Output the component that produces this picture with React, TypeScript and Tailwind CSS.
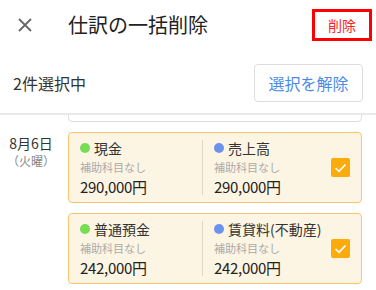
const font = "font-['Noto_Sans_CJK_JP','Noto_Sans',sans-serif]"

type Side = { name: string; dot: string; amount: string }

function CardSide({ side }: { side: Side }) {
  return (
    <div className="flex flex-col">
      <div className="flex items-center h-5 text-[14px] text-[#333]">
        <span className="w-[10px] h-[10px] rounded-full mr-[4px]" style={{ backgroundColor: side.dot }} />
        {side.name}
      </div>
      <div className="h-[18px] leading-[18px] text-[11px] text-[#aaa]">補助科目なし</div>
      <div className="h-[22px] leading-[22px] text-[15px] tracking-[-0.3px] text-[#222]">{side.amount}</div>
    </div>
  )
}

function Check() {
  return (
    <div className="w-[19px] h-[19px] rounded-[2px] bg-[#fbab0c] flex items-center justify-center">
      <svg width="13" height="10" viewBox="0 0 13 10">
        <path d="M1.5 5 L5 8.3 L11.5 1.5" fill="none" stroke="#fff" strokeWidth="1.7" />
      </svg>
    </div>
  )
}

function EntryCard({ left, right }: { left: Side; right: Side }) {
  return (
    <div className="flex h-[71px] rounded-[4px] border border-[#f9c66d] bg-[#fdf5e3]">
      <div className="w-[133px] pl-[11px] pt-[5px]">
        <CardSide side={left} />
      </div>
      <div className="w-px bg-[#dcd6cc] my-[7px]" />
      <div className="flex-1 flex items-center pl-[11px] pr-[11px]">
        <div className="flex-1 self-start pt-[5px]">
          <CardSide side={right} />
        </div>
        <Check />
      </div>
    </div>
  )
}

// card scrolled mostly out of view: only its bottom edge shows
function ScrolledCard() {
  return (
    <div className="flex h-[71px] rounded-[4px] border border-[#dedede] bg-white">
      <div className="w-[133px]" />
      <div className="w-px bg-[#ececec] my-[7px]" />
      <div className="flex-1" />
    </div>
  )
}

export default function App() {
  return (
    <div className={`${font} w-[376px] h-[290px] bg-white overflow-hidden flex flex-col`}>
      {/* Header */}
      <div className="h-[50px] shrink-0 flex items-center">
        <div className="w-[68px] flex justify-center pr-[18px]">
          <svg width="14" height="14" viewBox="0 0 14 14">
            <path d="M1 1 L13 13 M13 1 L1 13" stroke="#666" strokeWidth="1.8" />
          </svg>
        </div>
        <h1 className="flex-1 text-[20px] text-[#222]">仕訳の一括削除</h1>
        <button className="w-[60px] h-[32px] mr-[4px] border-[3px] border-[#ff0000] text-[14px] text-[#f22]">
          削除
        </button>
      </div>

      {/* Selection bar */}
      <div className="h-[65px] shrink-0 flex items-center justify-between pl-[13px] pr-[13px] pt-[3px] border-b-2 border-[#e8e8e8]">
        <span className="text-[16px] text-[#333]">2件選択中</span>
        <button className="w-[109px] h-[38px] rounded-[4px] border border-[#dddddd] text-[16px] text-[#4b8be8]">
          選択を解除
        </button>
      </div>

      {/* List */}
      <div className="flex-1 min-h-0 overflow-hidden">
        <div className="-mt-[64px] flex flex-col gap-[10px] pr-[14px]">
          <div className="flex">
            <div className="w-[68px]" />
            <div className="flex-1">
              <ScrolledCard />
            </div>
          </div>
          <div className="flex">
            <div className="w-[68px] pr-[6px] pt-[1px] flex flex-col items-center">
              <span className="text-[14px] leading-5 text-[#333]">8月6日</span>
              <span className="text-[12px] leading-4 text-[#888]">（火曜）</span>
            </div>
            <div className="flex-1 flex flex-col gap-[10px]">
              <EntryCard
                left={{ name: "現金", dot: "#77dd55", amount: "290,000円" }}
                right={{ name: "売上高", dot: "#6b93ee", amount: "290,000円" }}
              />
              <EntryCard
                left={{ name: "普通預金", dot: "#77dd55", amount: "242,000円" }}
                right={{ name: "賃貸料(不動産)", dot: "#6b93ee", amount: "242,000円" }}
              />
            </div>
          </div>
        </div>
      </div>
    </div>
  )
}
